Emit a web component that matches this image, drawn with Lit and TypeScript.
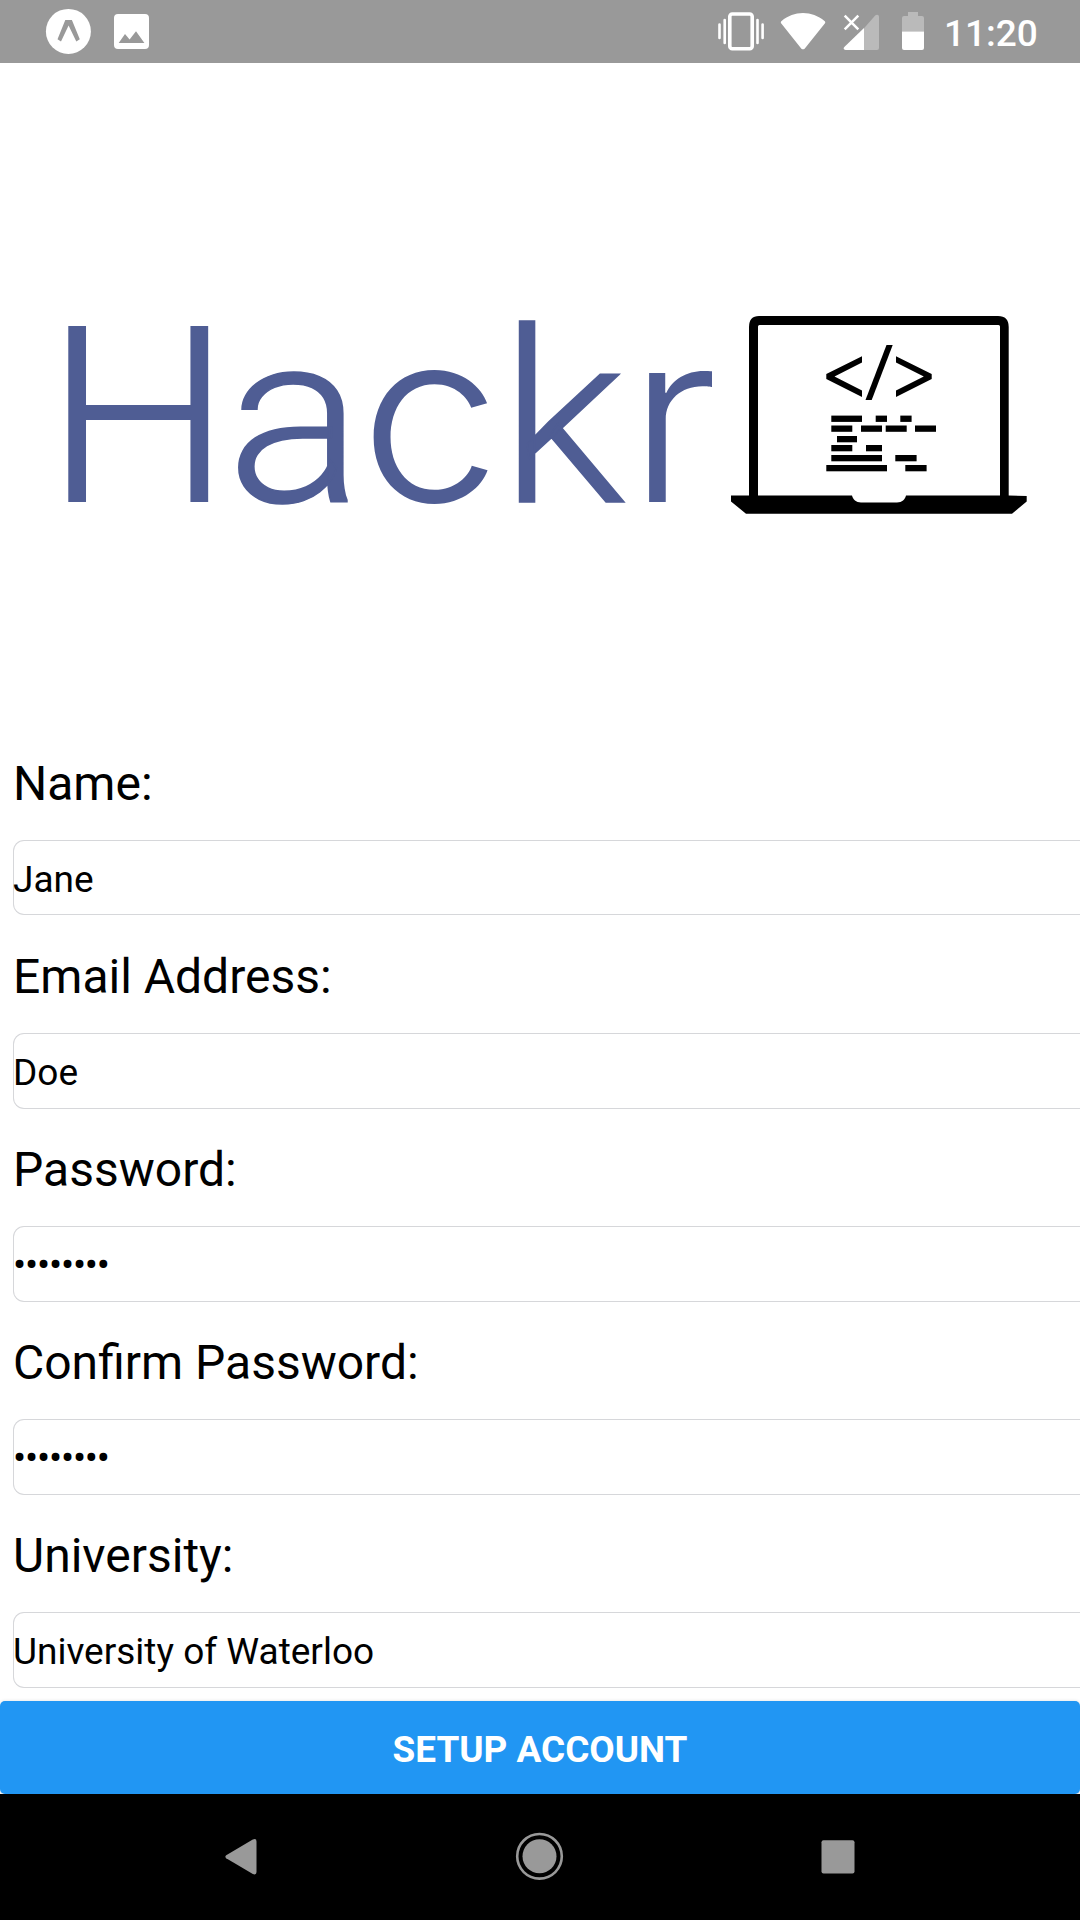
import { LitElement, html, css, svg } from "lit";
import { customElement, property } from "lit/decorators.js";

@customElement("status-bar")
class StatusBar extends LitElement {
  static styles = css`
    :host { display: block; }
    .bar { display: flex; justify-content: space-between; height: 63px; background: #999; color: #fff; }
    .icons { display: block; }
    .right { display: flex; align-items: center; }
    .time { font: 500 37px/63px Roboto, sans-serif; width: 136px; height: 63px; padding-top: 2px; box-sizing: border-box; }
  `;
  render() {
    return html`<div class="bar">
      <svg class="icons" width="200" height="63" viewBox="0 0 200 63">
        <circle cx="68.4" cy="31.4" r="22.5" fill="#fff" />
        <path d="M65.3 20h6.6l7.9 19.3-3.5 2.1L68.6 25.6 61 41.4l-3.5-2.1z" fill="#999" />
        <path fill-rule="evenodd" fill="#fff" d="M118 14h27a4 4 0 0 1 4 4v27a4 4 0 0 1-4 4h-27a4 4 0 0 1-4-4V18a4 4 0 0 1 4-4zM118.7 43H144.4L136 31.2 129.6 39.6 125 34.1z" />
      </svg>
      <div class="right">
        <svg class="icons" width="236" height="63" viewBox="708 0 236 63">
          <g fill="none" stroke="#fff">
            <rect x="729.8" y="14" width="22.4" height="34.8" rx="2.5" stroke-width="3.6" />
            <path d="M719.5 24.5V38M724.7 20V43M757.5 20V43M762.6 24.5V38" stroke-width="2.6" stroke-linecap="round" />
          </g>
          <path d="M803 49.3c-1 0-1.5-.5-2-1.1L781.3 23.5c-.7-.9-.6-2 .3-2.6C788 15.8 795 13 803 13s15 2.8 21.5 7.9c.9.6 1 1.7.3 2.6L805 48.2c-.5.6-1 1.1-2 1.1z" fill="#fff" />
          <path d="M864 28.3L875.2 15.6c1.6-1.5 3.8-.8 3.8 1.4V48a2 2 0 0 1-2 2H864z" fill="#bababa" />
          <path d="M864 28V50H845.5c-1.9 0-2.4-1.7-1.2-2.9z" fill="#fff" />
          <path d="M844.7 15.7L858.3 29.3M858.3 15.7L844.7 29.3" stroke="#fff" stroke-width="2.5" fill="none" />
          <path d="M908 12h10v4h4a2 2 0 0 1 2 2v13.5h-22V18a2 2 0 0 1 2-2h4z" fill="#bababa" />
          <path d="M902 31.5h22V48a2 2 0 0 1-2 2h-18a2 2 0 0 1-2-2z" fill="#fff" />
        </svg>
        <div class="time">11:20</div>
      </div>
    </div>`;
  }
}

const CODE_LINES: Array<[number, number, number]> = [
  [831.3, 415.6, 30.7], [875.7, 415.6, 11.3], [900.3, 415.6, 11.3],
  [831.3, 425.5, 21], [861, 425.5, 21], [885.7, 425.5, 21], [915, 425.5, 21],
  [837, 436, 20],
  [831.3, 445, 21], [866, 445, 16],
  [831.3, 455, 50.7], [895.3, 455, 21.3],
  [826.3, 465, 60.7], [905.3, 465, 21.3],
];

@customElement("brand-logo")
class BrandLogo extends LitElement {
  static styles = css`
    :host { display: block; }
    .logo { display: block; }
    .word { font-family: Inter, sans-serif; font-weight: 300; font-size: 242px; fill: #4f5d94; }
    .c { font-size: 239px; }
    .r { font-size: 237px; }
    .alt { font-family: Roboto, sans-serif; font-size: 242px; stroke: #4f5d94; stroke-width: 1.5px; }
  `;
  render() {
    return html`<svg class="logo" width="1080" height="677" viewBox="0 63 1080 677">
      <text class="word" transform="scale(1.055 1)" y="502"><tspan x="41.5">H</tspan><tspan class="alt" x="214.5">a</tspan><tspan class="c" x="341">c</tspan><tspan class="alt" x="474">k</tspan><tspan class="r" x="595.5">r</tspan></text>
      <path fill="#000" fill-rule="evenodd" d="M749 495.5V327Q749 316 759 316H998Q1008.7 316 1008.7 327V495.5L1026.7 496V501.5L1012 513.7H746L731 501.5V495.5zM759.5 325Q758 325 758 326.5V495.5H852C853 499.5 856 502.5 861 502.5H897C902 502.5 905 499.5 906 495.5H1000V326.5Q1000 325 998.5 325z" />
      <path fill="#000" d="M862 356.2V362.5L834.5 376.5L862 390.5V397L826.3 379V374zM896 356.2V362.5L923.8 376.5L896 390.5V397L931.7 379V374z" />
      <path fill="#000" d="M886.5 345h6.2L871.7 400h-6.2z" />
      ${CODE_LINES.map(([x, y, w]) => svg`<rect x=${x} y=${y} width=${w} height="6.3" />`)}
    </svg>`;
  }
}

@customElement("form-field")
class FormField extends LitElement {
  @property() label = "";
  @property() value = "";
  @property({ type: Boolean }) secret = false;
  static styles = css`
    :host { display: block; height: 193px; font-family: Roboto, sans-serif; color: #000; }
    .label { font-size: 48px; line-height: 56px; padding: 16px 0 28px 13px; height: 56px; white-space: nowrap; }
    .box { box-sizing: border-box; height: 76px; margin-left: 13px; border: 1px solid #d6d7da; border-right: 0; border-radius: 11px 0 0 11px;
      font-size: 37px; line-height: 77px; white-space: nowrap; }
    :host(:first-child) .box { height: 75px; }
    .text { display: block; margin-left: -1px; }
    .secret { margin-left: -1px; font-size: 39px; letter-spacing: -1.18px; line-height: 77px; }
  `;
  render() {
    return html`<div class="label">${this.label}</div>
      <div class="box"><span class="text ${this.secret ? "secret" : ""}">${this.secret ? "•".repeat(8) : this.value}</span></div>`;
  }
}

@customElement("nav-bar")
class NavBar extends LitElement {
  static styles = css`
    :host { display: block; background: #000; }
    .nav { display: block; }
  `;
  render() {
    return html`<svg class="nav" width="1080" height="126" viewBox="0 1794 1080 126" fill="#999">
      <path d="M226.2 1855.3L252.8 1839.6Q256.5 1838 256.5 1841.5V1872Q256.5 1875.5 252.8 1874L226.2 1858.3Q224.5 1856.8 226.2 1855.3z" />
      <circle cx="539.5" cy="1856.3" r="17" />
      <circle cx="539.5" cy="1856.3" r="22.3" fill="none" stroke="#999" stroke-width="2.6" />
      <rect x="821.5" y="1840.3" width="33" height="33.2" rx="2" />
    </svg>`;
  }
}

@customElement("app-root")
class AppRoot extends LitElement {
  static styles = css`
    :host { display: flex; flex-direction: column; width: 1080px; height: 1920px; overflow: hidden; background: #fff; }
    .form { height: 961px; }
    .submit { display: block; width: 1080px; height: 93px; padding: 3px 0 0; border: 0; border-radius: 5px; background: #2196f3; color: #fff;
      font: 700 36.9px/92px Roboto, sans-serif; text-align: center; box-shadow: 0 1px 4px rgba(0, 0, 0, 0.2); }
  `;
  render() {
    return html`<status-bar></status-bar>
      <brand-logo></brand-logo>
      <div class="form">
        <form-field label="Name:" value="Jane"></form-field>
        <form-field label="Email Address:" value="Doe"></form-field>
        <form-field label="Password:" secret></form-field>
        <form-field label="Confirm Password:" secret></form-field>
        <form-field label="University:" value="University of Waterloo"></form-field>
      </div>
      <button class="submit">SETUP ACCOUNT</button>
      <nav-bar></nav-bar>`;
  }
}
